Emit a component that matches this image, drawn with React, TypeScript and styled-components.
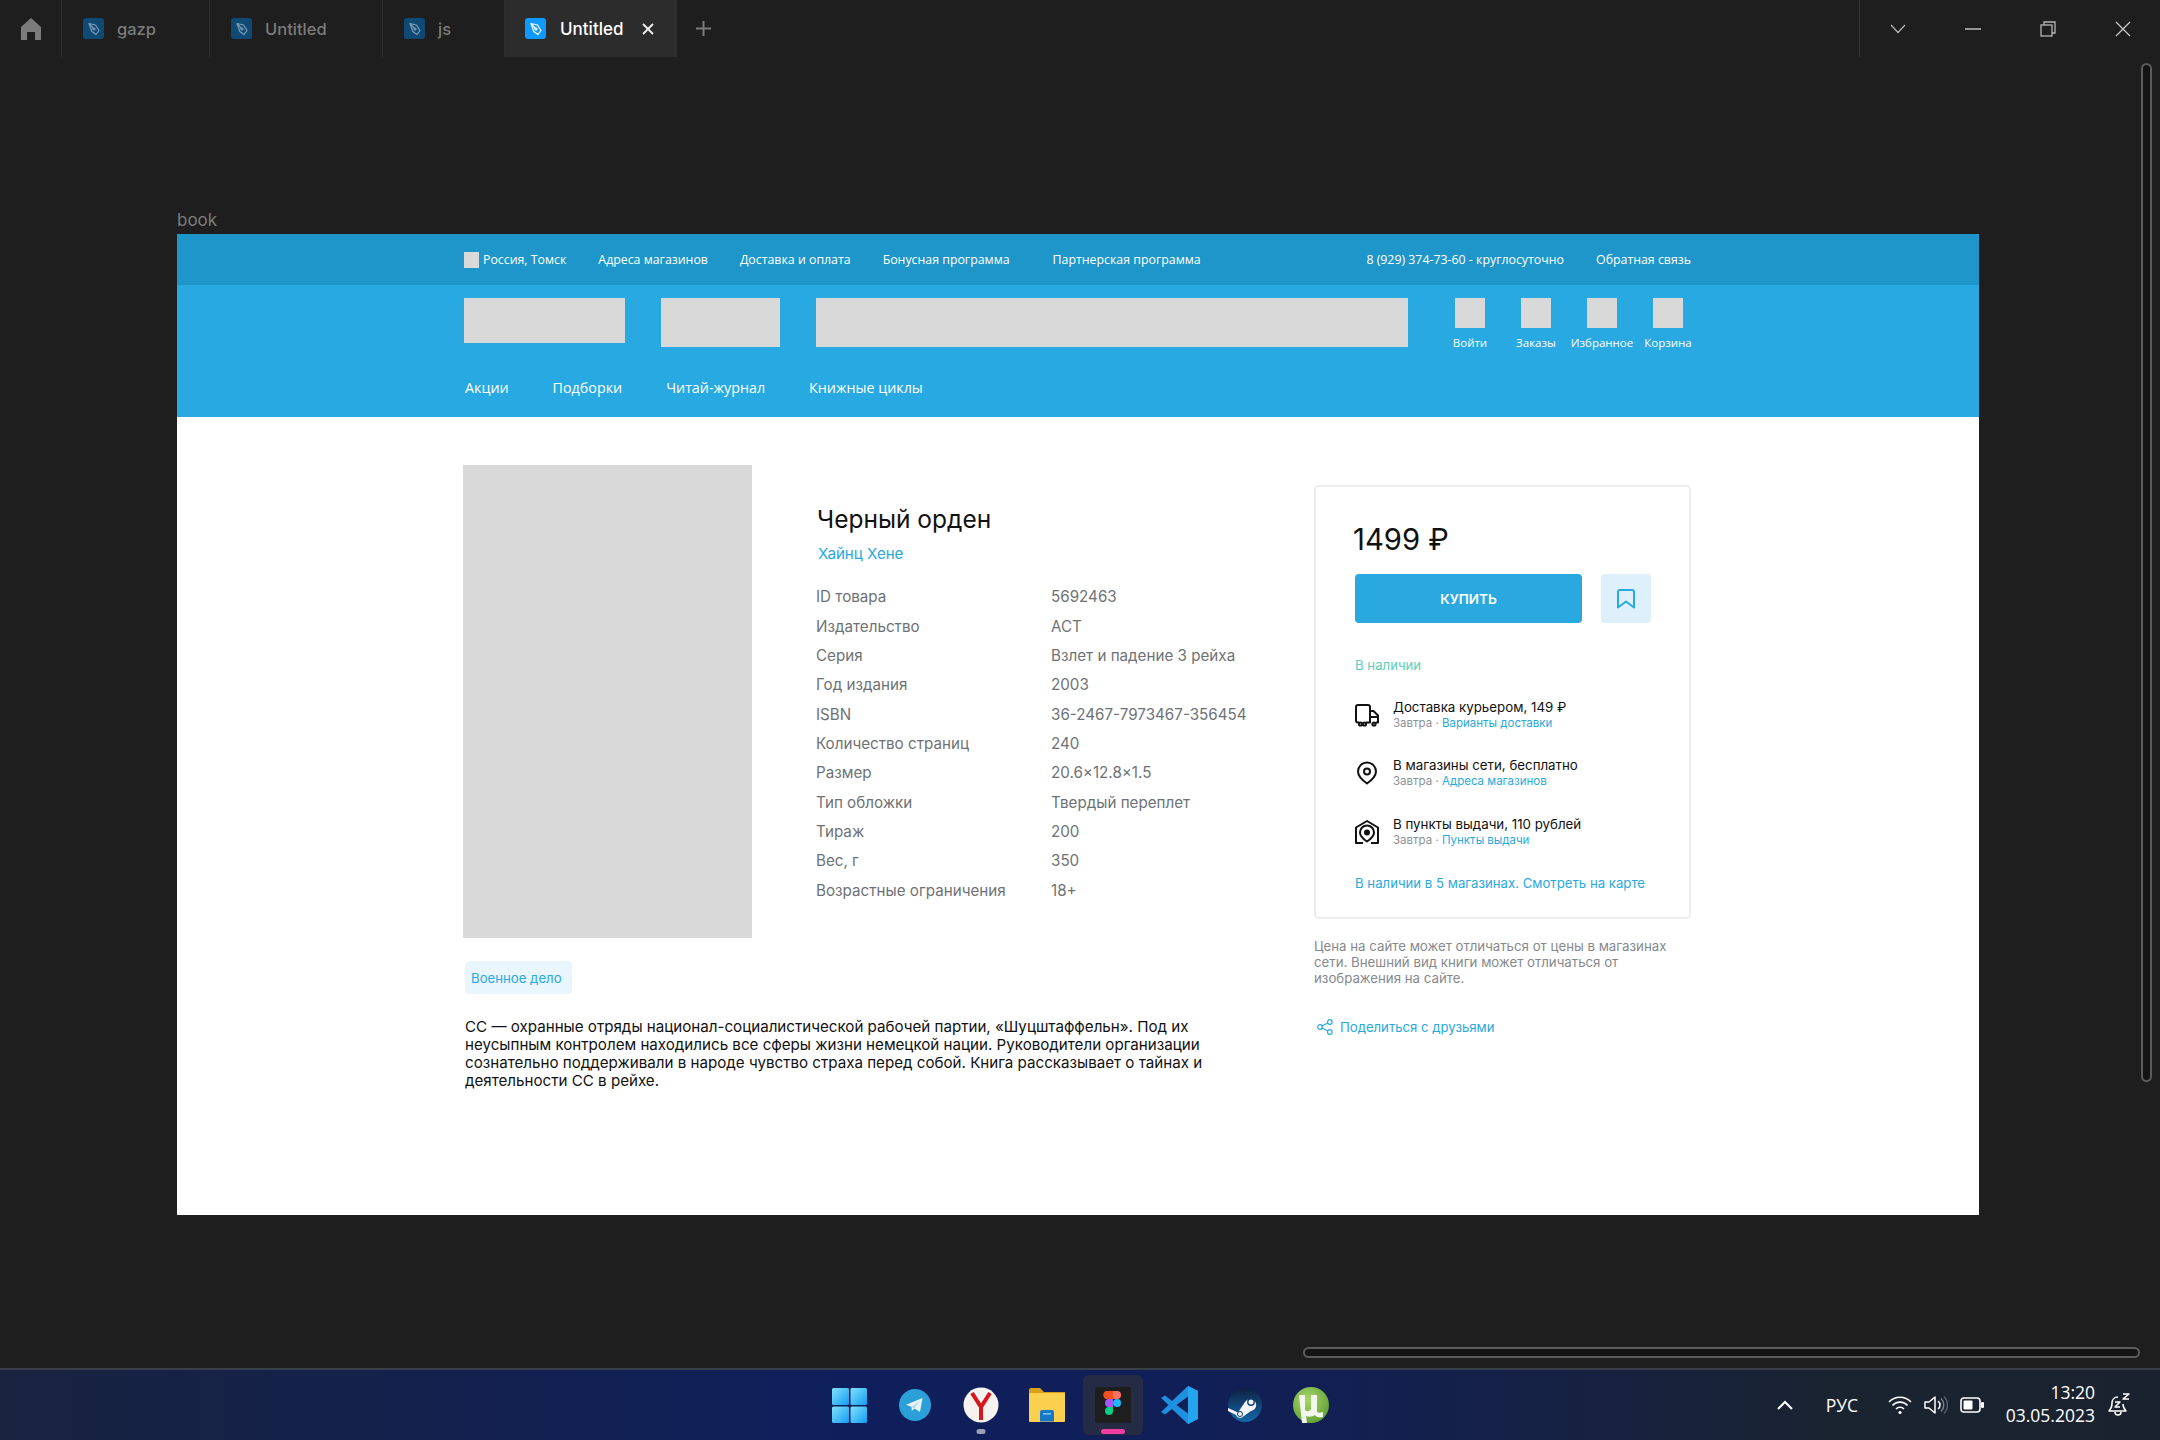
import React from "react";
import styled, {createGlobalStyle} from "styled-components";

const tabs = [
	{title: "gazp", width: 148},
	{title: "Untitled", width: 173},
	{title: "js", width: 122},
];

const specs = [
	["ID товара", "5692463"],
	["Издательство", "АСТ"],
	["Серия", "Взлет и падение 3 рейха"],
	["Год издания", "2003"],
	["ISBN", "36-2467-7973467-356454"],
	["Количество страниц", "240"],
	["Размер", "20.6×12.8×1.5"],
	["Тип обложки", "Твердый переплет"],
	["Тираж", "200"],
	["Вес, г", "350"],
	["Возрастные ограничения", "18+"],
];

const PenIcon = () => (
	<svg width="12" height="14" viewBox="0 0 12 14" fill="none" stroke="currentColor" strokeWidth="1.2" strokeLinejoin="round">
		<path d="M1 1.5 L7.5 3 L11 8.5 L8 12.5 L3.8 9.5 Z"/>
		<path d="M1 1.5 L5.5 6.5"/>
		<circle cx="6" cy="7" r="1"/>
	</svg>
);

const TruckIcon = () => (
	<svg width="24" height="23" viewBox="0 0 24 23" fill="none" stroke="#111" strokeWidth="2" strokeLinejoin="round">
		<path d="M4 18.5 H3 a2 2 0 0 1-2-2 V3 a2 2 0 0 1 2-2 H13 a2 2 0 0 1 2 2 V18.5 H11"/>
		<path d="M15 7 H18.5 L23 11.5 V18.5 H21"/>
		<path d="M15 13 H23"/>
		<circle cx="5.5" cy="20" r="1.6"/>
		<circle cx="9.5" cy="20" r="1.6"/>
		<circle cx="19" cy="20" r="1.6"/>
	</svg>
);

const PinIcon = () => (
	<svg width="24" height="24" viewBox="0 0 24 24" fill="none" stroke="#111" strokeWidth="2" strokeLinejoin="round">
		<path d="M12 1.5 a9 9 0 0 1 9 9 c0 5-4.5 8.8-9 12 c-4.5-3.2-9-7-9-12 a9 9 0 0 1 9-9z"/>
		<circle cx="12" cy="10.5" r="3"/>
	</svg>
);

const PickupIcon = () => (
	<svg width="24" height="24" viewBox="0 0 24 24" fill="none" stroke="#111" strokeWidth="2" strokeLinejoin="round">
		<path d="M8 23 H1 V7.5 L12 1 L23 7.5 V23 H16"/>
		<path d="M12 21.5 c-4-2.6-7-5.4-7-9 a7 7 0 0 1 14 0 c0 3.6-3 6.4-7 9z"/>
		<circle cx="12" cy="12.5" r="3" fill="#111" stroke="none"/>
	</svg>
);

const BookmarkIcon = () => (
	<svg width="18" height="20" viewBox="0 0 18 20" fill="none" stroke="#29a9e0" strokeWidth="2" strokeLinejoin="round">
		<path d="M3 1 H15 a2 2 0 0 1 2 2 V18.5 L9 12.5 L1 18.5 V3 a2 2 0 0 1 2-2z"/>
	</svg>
);

const ShareIcon = () => (
	<svg width="16" height="16" viewBox="0 0 16 16" fill="none" stroke="#29a9e0" strokeWidth="1.2">
		<circle cx="3" cy="8" r="2.3"/>
		<circle cx="12.8" cy="3" r="2.3"/>
		<circle cx="12.8" cy="13" r="2.3"/>
		<path d="M5 7 L10.8 4 M5 9 L10.8 12"/>
	</svg>
);

const WindowsLogo = () => (
	<svg width="35" height="35" viewBox="0 0 35 35">
		<defs>
			<linearGradient id="win" x1="0" y1="0" x2="1" y2="1">
				<stop offset="0" stopColor="#7fe3fb"/>
				<stop offset="1" stopColor="#159bf3"/>
			</linearGradient>
		</defs>
		<rect x="0" y="0" width="17" height="17" rx="1.5" fill="url(#win)"/>
		<rect x="18.5" y="0" width="16.5" height="17" rx="1.5" fill="url(#win)"/>
		<rect x="0" y="18.5" width="17" height="16.5" rx="1.5" fill="url(#win)"/>
		<rect x="18.5" y="18.5" width="16.5" height="16.5" rx="1.5" fill="url(#win)"/>
	</svg>
);

const TelegramLogo = () => (
	<svg width="32" height="32" viewBox="0 0 32 32">
		<circle cx="16" cy="16" r="16" fill="#2a9fd8"/>
		<path d="M7 15.8 L23.5 9 L21 23 L15.5 19.5 L12.8 22 L12.6 18 Z" fill="#e6f4fb"/>
		<path d="M12.6 18 L20.5 12 L15.5 19.5 Z" fill="#b5d9ec"/>
	</svg>
);

const YandexLogo = () => (
	<svg width="36" height="36" viewBox="0 0 36 36">
		<circle cx="18" cy="18" r="17.5" fill="#f5f2f0"/>
		<path d="M9 6 L18 20 L27 6 M18 20 V33" fill="none" stroke="#d8141c" strokeWidth="4"/>
	</svg>
);

const FolderLogo = () => (
	<svg width="36" height="34" viewBox="0 0 36 34">
		<path d="M0 2 a2 2 0 0 1 2-2 H11 L15 4 H36 V10 H0z" fill="#d9a01a"/>
		<rect x="0" y="5" width="36" height="29" rx="1" fill="#fbd04f"/>
		<path d="M11 33.5 V24 a2 2 0 0 1 2-2 H23 a2 2 0 0 1 2 2 V33.5z" fill="#1778c9"/>
		<rect x="14" y="25" width="8" height="1.6" fill="#7cc4f2"/>
	</svg>
);

const FigmaLogo = () => (
	<svg width="36" height="36" viewBox="0 0 36 36">
		<rect width="36" height="36" rx="2" fill="#1e1e1e"/>
		<path d="M11 4 h7 v8 h-4 a4 4 0 0 1-3-8z" fill="#f24e1e"/>
		<path d="M18 4 h4 a4 4 0 0 1 0 8 h-4z" fill="#ff7262"/>
		<path d="M18 12 h-4 a4 4 0 0 0 0 8 h4z" fill="#a259ff"/>
		<circle cx="22" cy="16" r="4" fill="#1abcfe"/>
		<path d="M14 20 h4 v4 a4 4 0 1 1-4-4z" fill="#0acf83"/>
	</svg>
);

const VsCodeLogo = () => (
	<svg width="37" height="38" viewBox="0 0 37 38">
		<path d="M27 0 L37 5 V33 L27 38 L11 23 L4 28.5 L0 26 L7.5 19 L0 12 L4 9.5 L11 15 Z M27 10.5 L15.5 19 L27 27.5 Z" fill="#1f8fe0"/>
		<path d="M27 0 L37 5 V33 L27 38 V27.5 V10.5 Z" fill="#25a5f0"/>
	</svg>
);

const SteamLogo = () => (
	<svg width="34" height="34" viewBox="0 0 34 34">
		<defs>
			<linearGradient id="steam" x1="0" y1="0" x2="0" y2="1">
				<stop offset="0" stopColor="#0f1f42"/>
				<stop offset="1" stopColor="#1469a8"/>
			</linearGradient>
		</defs>
		<circle cx="17" cy="17" r="17" fill="url(#steam)"/>
		<path d="M0 20 L10 24.5 L17 14 a6 6 0 1 1 6 9 L13 30 a5 5 0 0 1-5-3 L0 23z" fill="#f2f4f6"/>
		<circle cx="23" cy="14" r="3.2" fill="none" stroke="#123c6a" strokeWidth="1.4"/>
		<circle cx="12" cy="26" r="2.5" fill="none" stroke="#123c6a" strokeWidth="1"/>
	</svg>
);

const TorrentLogo = () => (
	<svg width="36" height="38" viewBox="0 0 36 38">
		<defs>
			<radialGradient id="utor" cx="0.4" cy="0.35" r="0.75">
				<stop offset="0" stopColor="#a6d66a"/>
				<stop offset="1" stopColor="#5d9c32"/>
			</radialGradient>
		</defs>
		<circle cx="18" cy="19" r="18" fill="url(#utor)"/>
		<path d="M6 9 H12 V23 c0 3 5 3 6 0 V9 H24 V25 c0 2 2 2 6 1 V31 c-4 1-7 0-8-2 c-3 2-6 2-9 1 L14 37 H9 Z" fill="#f1f7ea"/>
	</svg>
);

const App = () => {
	return (
		<Window>
			<GlobalStyle/>
			<TitleBar>
				<HomeTab>
					<svg width="20" height="22" viewBox="0 0 20 22" fill="#7b7b7b">
						<path d="M10 0 L20 9 V22 H14 V14 H6 V22 H0 V9 Z"/>
					</svg>
				</HomeTab>
				{tabs.map(tab => (
					<Tab key={tab.title} $width={tab.width}>
						<FileBadge><PenIcon/></FileBadge>
						{tab.title}
					</Tab>
				))}
				<ActiveTab>
					<FileBadge $active><PenIcon/></FileBadge>
					<ActiveTabTitle>Untitled</ActiveTabTitle>
					<svg width="14" height="14" viewBox="0 0 14 14" stroke="#eee" strokeWidth="1.8">
						<path d="M2 2 L12 12 M12 2 L2 12"/>
					</svg>
				</ActiveTab>
				<AddTab>
					<svg width="15" height="15" viewBox="0 0 15 15" stroke="#7b7b7b" strokeWidth="2">
						<path d="M7.5 0 V15 M0 7.5 H15"/>
					</svg>
				</AddTab>
				<WindowControls>
					<WindowButton>
						<svg width="16" height="10" viewBox="0 0 16 10" fill="none" stroke="#b5b5b5" strokeWidth="1.2"><path d="M1 1 L8 8.5 L15 1"/></svg>
					</WindowButton>
					<WindowButton>
						<svg width="16" height="4" viewBox="0 0 16 4" stroke="#b5b5b5" strokeWidth="1.6"><path d="M0 2 H16"/></svg>
					</WindowButton>
					<WindowButton>
						<svg width="16" height="16" viewBox="0 0 16 16" fill="none" stroke="#b5b5b5" strokeWidth="1.3">
							<rect x="1" y="4" width="11" height="11"/>
							<path d="M4 4 V1 H15 V12 H12"/>
						</svg>
					</WindowButton>
					<WindowButton>
						<svg width="16" height="16" viewBox="0 0 16 16" stroke="#c8c8c8" strokeWidth="1.3"><path d="M1 1 L15 15 M15 1 L1 15"/></svg>
					</WindowButton>
				</WindowControls>
			</TitleBar>

			<Canvas>
				<FrameLabel>book</FrameLabel>
				<Frame>
					<TopBar>
						<TopGroup>
							<Region><Flag/>Россия, Томск</Region>
							<span>Адреса магазинов</span>
							<span>Доставка и оплата</span>
							<span>Бонусная программа</span>
							<PartnerLink>Партнерская программа</PartnerLink>
						</TopGroup>
						<TopGroup>
							<span>8 (929) 374-73-60 - круглосуточно</span>
							<span>Обратная связь</span>
						</TopGroup>
					</TopBar>

					<Header>
						<HeaderRow>
							<Placeholder $width={161} $height={45}/>
							<Placeholder $width={119} $height={49}/>
							<Placeholder $width={592} $height={49}/>
							<Account>
								{["Войти", "Заказы", "Избранное", "Корзина"].map(label => (
									<AccountItem key={label}>
										<Placeholder $width={30} $height={30}/>
										<AccountLabel>{label}</AccountLabel>
									</AccountItem>
								))}
							</Account>
						</HeaderRow>
						<Nav>
							<span>Акции</span>
							<span>Подборки</span>
							<span>Читай-журнал</span>
							<span>Книжные циклы</span>
						</Nav>
					</Header>

					<Main>
						<Product>
							<ProductTop>
								<Cover/>
								<Details>
									<Title>Черный орден</Title>
									<Author>Хайнц Хене</Author>
									<Specs>
										{specs.map(([name, value]) => (
											<SpecRow key={name}>
												<span>{name}</span>
												<span>{value}</span>
											</SpecRow>
										))}
									</Specs>
								</Details>
							</ProductTop>
							<Tag>Военное дело</Tag>
							<Description>
								СС — охранные отряды национал-социалистической рабочей партии, «Шуцштаффельн». Под их
								неусыпным контролем находились все сферы жизни немецкой нации. Руководители организации
								сознательно поддерживали в народе чувство страха перед собой. Книга рассказывает о тайнах и
								деятельности СС в рейхе.
							</Description>
						</Product>

						<Aside>
							<BuyCard>
								<Price>1499 ₽</Price>
								<BuyRow>
									<BuyButton>КУПИТЬ</BuyButton>
									<SaveButton><BookmarkIcon/></SaveButton>
								</BuyRow>
								<InStock>В наличии</InStock>
								<Delivery $top={25}>
									<TruckIcon/>
									<div>
										<DeliveryTitle>Доставка курьером, 149 ₽</DeliveryTitle>
										<DeliverySub>Завтра · <a>Варианты доставки</a></DeliverySub>
									</div>
								</Delivery>
								<Delivery $top={26}>
									<PinIcon/>
									<div>
										<DeliveryTitle>В магазины сети, бесплатно</DeliveryTitle>
										<DeliverySub>Завтра · <a>Адреса магазинов</a></DeliverySub>
									</div>
								</Delivery>
								<Delivery $top={27}>
									<PickupIcon/>
									<div>
										<DeliveryTitle>В пункты выдачи, 110 рублей</DeliveryTitle>
										<DeliverySub>Завтра · <a>Пункты выдачи</a></DeliverySub>
									</div>
								</Delivery>
								<StoresLink>В наличии в 5 магазинах. Смотреть на карте</StoresLink>
							</BuyCard>
							<Note>Цена на сайте может отличаться от цены в магазинах сети. Внешний вид книги может отличаться от изображения на сайте.</Note>
							<ShareLink><ShareIcon/>Поделиться с друзьями</ShareLink>
						</Aside>
					</Main>
				</Frame>
				<VerticalScroll/>
				<HorizontalScroll/>
			</Canvas>

			<Taskbar>
				<span/>
				<TaskIcons>
					<TaskIcon><WindowsLogo/></TaskIcon>
					<TaskIcon><TelegramLogo/></TaskIcon>
					<TaskIcon $running><YandexLogo/></TaskIcon>
					<TaskIcon><FolderLogo/></TaskIcon>
					<TaskIcon $active><FigmaLogo/></TaskIcon>
					<TaskIcon><VsCodeLogo/></TaskIcon>
					<TaskIcon><SteamLogo/></TaskIcon>
					<TaskIcon><TorrentLogo/></TaskIcon>
				</TaskIcons>
				<Tray>
					<svg width="16" height="10" viewBox="0 0 16 10" fill="none" stroke="#fff" strokeWidth="2"><path d="M1 9 L8 2 L15 9"/></svg>
					<Lang>РУС</Lang>
					<TrayIcons>
						<svg width="24" height="20" viewBox="0 0 24 20" fill="none" stroke="#fff" strokeWidth="1.6">
							<path d="M1 7 a15 15 0 0 1 22 0 M4.5 10.5 a10 10 0 0 1 15 0 M8 14 a5.5 5.5 0 0 1 8 0"/>
							<circle cx="12" cy="17.5" r="1.6" fill="#fff" stroke="none"/>
						</svg>
						<svg width="24" height="20" viewBox="0 0 24 20" fill="none" stroke="#fff" strokeWidth="1.5">
							<path d="M1 7 H5 L11 2 V18 L5 13 H1z" strokeLinejoin="round"/>
							<path d="M14 6 a5 5 0 0 1 0 8"/>
							<path d="M17 3.5 a9 9 0 0 1 0 13" stroke="#777f8a"/>
							<path d="M20 1.5 a12 12 0 0 1 0 17" stroke="#555d68"/>
						</svg>
						<svg width="24" height="16" viewBox="0 0 24 16" fill="none" stroke="#fff" strokeWidth="1.6">
							<rect x="1" y="1" width="19" height="14" rx="3"/>
							<rect x="3.5" y="3.5" width="9" height="9" rx="1" fill="#fff" stroke="none"/>
							<rect x="21" y="5" width="3" height="6" rx="1" fill="#fff" stroke="none"/>
						</svg>
					</TrayIcons>
					<Clock>
						<span>13:20</span>
						<span>03.05.2023</span>
					</Clock>
					<svg width="22" height="24" viewBox="0 0 22 24" fill="none" stroke="#fff" strokeWidth="1.5" strokeLinejoin="round">
						<path d="M10 4 c-4 0-6 3-6 6 c0 4-1 6-3 8 H18 c-2-2-3-4-3-7"/>
						<path d="M7 19 a3 3 0 0 0 6 0"/>
						<path d="M7 9 H12 L7 14 H12"/>
						<path d="M15 1 H21 L15 6 H21"/>
					</svg>
				</Tray>
			</Taskbar>
		</Window>
	)
}

export default App;

const GlobalStyle = createGlobalStyle`
  html, body {
    margin: 0;
    padding: 0;
    height: 1440px;
    overflow: hidden;
    background: #1e1e1e;
  }
  * {
    box-sizing: border-box;
  }
`

const Window = styled.div`
  width: 2160px;
  height: 1440px;
  display: flex;
  flex-direction: column;
  overflow: hidden;
  background: #1e1e1e;
  font-family: "Inter", "Liberation Sans", sans-serif;
`

const TitleBar = styled.div`
  height: 57px;
  flex: none;
  display: flex;
  color: #7b7b7b;
  font-size: 16.5px;
  font-weight: 500;
`

const HomeTab = styled.div`
  width: 62px;
  display: flex;
  align-items: center;
  justify-content: center;
  border-right: 1px solid #2e2e2e;
`

const Tab = styled.div<{$width: number}>`
  width: ${props => props.$width}px;
  display: flex;
  align-items: center;
  gap: 13px;
  padding-left: 21px;
  border-right: 1px solid #2e2e2e;
`

const ActiveTab = styled.div`
  width: 172px;
  display: flex;
  align-items: center;
  padding-left: 20px;
  background: #2c2c2c;
  color: #fff;
  font-size: 17px;
`

const ActiveTabTitle = styled.span`
  margin: 0 18px 0 14px;
`

const FileBadge = styled.div<{$active?: boolean}>`
  width: 21px;
  height: 21px;
  display: flex;
  align-items: center;
  justify-content: center;
  border-radius: 3px;
  background: ${props => props.$active ? "#0d99ff" : "#0f4a75"};
  color: ${props => props.$active ? "#fff" : "#7b9cb5"};
`

const AddTab = styled.div`
  display: flex;
  align-items: center;
  padding-left: 19px;
`

const WindowControls = styled.div`
  margin-left: auto;
  display: flex;
  border-left: 1px solid #333;
`

const WindowButton = styled.div`
  width: 75px;
  display: flex;
  align-items: center;
  justify-content: center;
`

const Canvas = styled.div`
  position: relative;
  flex: 1;
  padding: 153px 0 0 177px;
`

const FrameLabel = styled.div`
  height: 24px;
  line-height: 20px;
  font-size: 17px;
  color: #7b7b7b;
`

const Frame = styled.div`
  width: 1802px;
  height: 981px;
  background: #fff;
  display: flex;
  flex-direction: column;
`

const TopBar = styled.div`
  height: 51px;
  flex: none;
  display: flex;
  align-items: center;
  justify-content: space-between;
  padding: 0 288px 0 287px;
  background: #1f96c9;
  color: #fff;
  font-family: "Open Sans", sans-serif;
  font-size: 12.35px;
`

const TopGroup = styled.div`
  display: flex;
  align-items: center;
  gap: 32px;
`

const Region = styled.span`
  display: flex;
  align-items: center;
  gap: 4px;
`

const Flag = styled.span`
  width: 15px;
  height: 16px;
  background: #d9d9d9;
`

const PartnerLink = styled.span`
  margin-left: 11px;
`

const Header = styled.div`
  height: 132px;
  flex: none;
  padding: 13px 288px 0 287px;
  background: #28a9e1;
  color: #fff;
  font-family: "Open Sans", sans-serif;
`

const HeaderRow = styled.div`
  display: flex;
  align-items: flex-start;
  gap: 36px;
`

const Placeholder = styled.div<{$width: number, $height: number}>`
  width: ${props => props.$width}px;
  height: ${props => props.$height}px;
  flex: none;
  background: #d9d9d9;
`

const Account = styled.div`
  margin-left: -7px;
  display: flex;
`

const AccountItem = styled.div`
  width: 66px;
  display: flex;
  flex-direction: column;
  align-items: center;
  gap: 7px;
`

const AccountLabel = styled.span`
  font-size: 11.5px;
  line-height: 16px;
  white-space: nowrap;
`

const Nav = styled.nav`
  margin: 27px 0 0 1px;
  display: flex;
  gap: 44px;
  font-size: 14.3px;
  line-height: 20px;
`

const Main = styled.main`
  flex: 1;
  display: flex;
  align-items: flex-start;
  padding: 48px 0 0 286px;
`

const Product = styled.section`
  width: 851px;
  flex: none;
`

const ProductTop = styled.div`
  display: flex;
`

const Cover = styled.div`
  width: 289px;
  height: 473px;
  flex: none;
  background: #d9d9d9;
`

const Details = styled.div`
  margin-left: 65px;
  padding-top: 37px;
`

const Title = styled.h1`
  margin: 0;
  font-size: 24.5px;
  line-height: 34px;
  font-weight: 400;
  color: #111;
`

const Author = styled.a`
  display: block;
  margin: 9px 0 0 1px;
  font-size: 15.1px;
  line-height: 18px;
  color: #29a9e0;
`

const Specs = styled.div`
  margin-top: 19px;
  margin-left: -1px;
`

const SpecRow = styled.div`
  display: grid;
  grid-template-columns: 235px auto;
  height: 29.36px;
  align-items: center;
  font-size: 15.2px;
  color: #6e7276;
`

const Tag = styled.div`
  width: 107px;
  height: 33px;
  margin: 23px 0 0 2px;
  padding-left: 6px;
  display: flex;
  align-items: center;
  border-radius: 4px;
  background: #e9f6fd;
  color: #29a9e0;
  font-size: 13.2px;
`

const Description = styled.p`
  width: 760px;
  margin: 24px 0 0 2px;
  font-size: 15.15px;
  line-height: 18px;
  color: #111;
`

const Aside = styled.aside`
  width: 377px;
  flex: none;
  margin-top: 20px;
`

const BuyCard = styled.div`
  height: 434px;
  padding: 35px 38px 0 39px;
  border: 2px solid #ececec;
  border-radius: 5px;
`

const Price = styled.div`
  font-size: 29.25px;
  line-height: 36px;
  color: #111;
  margin-left: -2px;
`

const BuyRow = styled.div`
  margin-top: 16px;
  display: flex;
  gap: 19px;
`

const BuyButton = styled.button`
  width: 227px;
  height: 49px;
  border: 0;
  border-radius: 4px;
  background: #29a9e0;
  color: #fff;
  font-family: inherit;
  font-size: 13.5px;
  font-weight: 600;
`

const SaveButton = styled.button`
  width: 50px;
  height: 49px;
  padding: 0;
  border: 0;
  border-radius: 4px;
  background: #def0fc;
  display: flex;
  align-items: center;
  justify-content: center;
`

const InStock = styled.div`
  margin-top: 33px;
  font-size: 13.2px;
  line-height: 18px;
  color: #5cd0b8;
`

const Delivery = styled.div<{$top: number}>`
  margin-top: ${props => props.$top}px;
  display: flex;
  align-items: center;
  gap: 14px;
`

const DeliveryTitle = styled.div`
  font-size: 13.3px;
  line-height: 16px;
  color: #111;
`

const DeliverySub = styled.div`
  font-size: 11.5px;
  line-height: 16px;
  color: #8d9196;

  a {
    color: #29a9e0;
  }
`

const StoresLink = styled.a`
  display: block;
  margin-top: 26px;
  font-size: 13.2px;
  line-height: 18px;
  white-space: nowrap;
  color: #29a9e0;
`

const Note = styled.p`
  width: 370px;
  margin: 19px 0 0;
  font-size: 13.25px;
  line-height: 16px;
  color: #85898e;
`

const ShareLink = styled.a`
  margin: 32px 0 0 3px;
  display: flex;
  align-items: center;
  gap: 7px;
  font-size: 13.15px;
  line-height: 18px;
  color: #29a9e0;
`

const VerticalScroll = styled.div`
  position: absolute;
  top: 6px;
  right: 8px;
  width: 11px;
  height: 1019px;
  border: 2px solid #5c5c5c;
  border-radius: 6px;
  background: #141414;
`

const HorizontalScroll = styled.div`
  position: absolute;
  left: 1303px;
  bottom: 10px;
  width: 837px;
  height: 11px;
  border: 2px solid #5c5c5c;
  border-radius: 6px;
  background: #141414;
`

const Taskbar = styled.footer`
  height: 72px;
  flex: none;
  display: grid;
  grid-template-columns: 1fr auto 1fr;
  align-items: center;
  border-top: 2px solid #3a4049;
  background: linear-gradient(90deg, #18233f 0%, #0f1f5c 40%, #111f55 60%, #1a2330 85%, #1a2230 100%);
  color: #fff;
  font-family: "Open Sans", sans-serif;
`

const TaskIcons = styled.div`
  display: flex;
`

const TaskIcon = styled.div<{$active?: boolean, $running?: boolean}>`
  position: relative;
  width: 66px;
  height: 60px;
  display: flex;
  align-items: center;
  justify-content: center;

  svg {
    position: relative;
  }

  &::before {
    content: "";
    display: ${props => props.$active ? "block" : "none"};
    position: absolute;
    inset: 0 3px;
    border-radius: 6px;
    background: #262b45;
  }

  &::after {
    content: "";
    display: ${props => props.$active || props.$running ? "block" : "none"};
    position: absolute;
    left: 50%;
    bottom: 1px;
    width: ${props => props.$active ? 24 : 9}px;
    height: 5px;
    transform: translateX(-50%);
    border-radius: 3px;
    background: ${props => props.$active ? "#ee3fa0" : "#9aa0b5"};
  }
`

const Tray = styled.div`
  display: flex;
  align-items: center;
  justify-content: flex-end;
  padding-right: 30px;
`

const Lang = styled.span`
  margin: 0 30px 0 33px;
  font-size: 17.5px;
`

const TrayIcons = styled.div`
  display: flex;
  align-items: center;
  gap: 12px;
`

const Clock = styled.div`
  margin: -3px 13px 0 0;
  width: 111px;
  display: flex;
  flex-direction: column;
  align-items: flex-end;
  font-size: 17.5px;
  line-height: 23px;
`
